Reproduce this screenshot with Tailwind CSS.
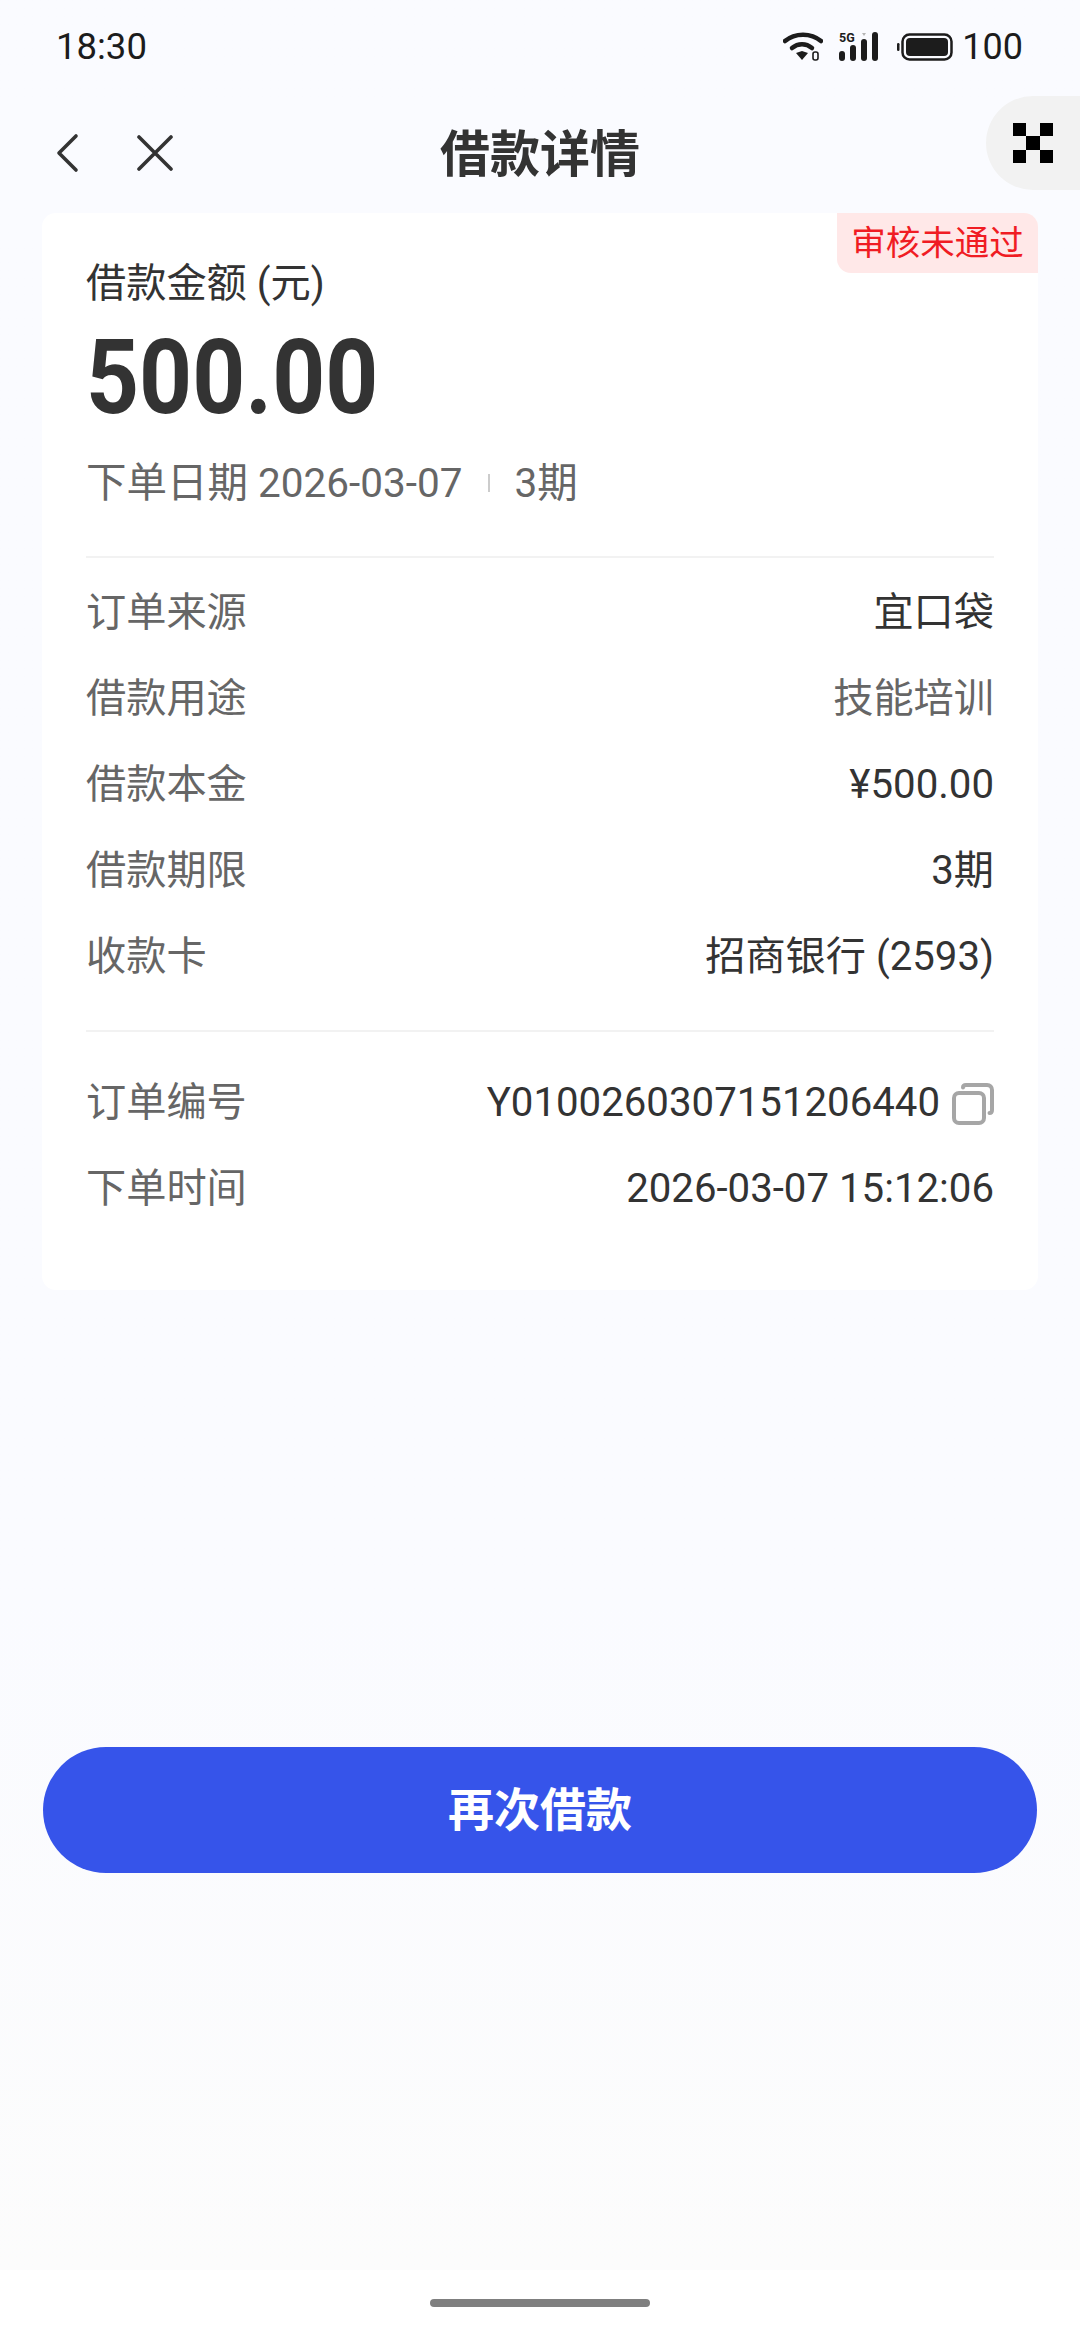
<!doctype html>
<html><head><meta charset="utf-8"><script src="https://cdn.jsdelivr.net/npm/@tailwindcss/browser@4"></script></head>
<body class="m-0">
<div class="relative w-[1080px] h-[2340px] overflow-hidden flex flex-col bg-white font-['Roboto','Noto_Sans_CJK_SC',sans-serif]">
  <div class="h-[2270px] flex flex-col bg-gradient-to-b from-[#fafbff] from-70% to-[#fcfcfc]">
    <!-- status bar -->
    <div class="h-[94px] shrink-0 pl-[56px] pr-[57px] flex items-center justify-between text-[#1c1c1c] text-[36px]">
      <span class="leading-none text-[36.5px]">18:30</span>
      <div class="flex items-center">
        <svg width="40" height="30" viewBox="0 0 40 30" class="mr-[16px]" fill="none"><path d="M2 9C12 0.5 28 0.5 38 9" stroke="#1c1c1c" stroke-width="4.5" stroke-linecap="round"/><path d="M9 16C15 11 23 11 29 16" stroke="#1c1c1c" stroke-width="4.5" stroke-linecap="round"/><path d="M13 21L19 19L25 21L19 28Z" fill="#1c1c1c"/><rect x="30" y="20" width="5" height="8" rx="2" fill="none" stroke="#1c1c1c" stroke-width="1.6"/></svg>
        <svg width="40" height="36" viewBox="0 -6 40 36" class="mr-[18px] -mt-[6px]"><text x="0" y="10" font-size="12.5" font-weight="700" fill="#1c1c1c" font-family="Roboto">5G</text><rect x="0" y="19" width="6" height="10" rx="3" fill="#1c1c1c"/><rect x="11" y="13" width="6" height="16" rx="3" fill="#1c1c1c"/><rect x="22" y="7" width="6" height="22" rx="3" fill="#1c1c1c"/><rect x="33" y="0" width="6" height="29" rx="3" fill="#1c1c1c"/><path d="M23 1H27L25 4Z" fill="#b5b5b5"/></svg>
        <svg width="56" height="28" viewBox="0 0 56 28" class="mr-[9px]" fill="none"><rect x="0" y="10" width="2.5" height="8" rx="1.2" fill="#1c1c1c"/><rect x="5.5" y="1.5" width="49" height="25" rx="7" stroke="#1c1c1c" stroke-width="2.5"/><rect x="9" y="5" width="42" height="18" rx="4" fill="#1c1c1c"/></svg>
        <span class="leading-none">100</span>
      </div>
    </div>
    <!-- nav -->
    <div class="relative h-[118px] shrink-0 flex items-center justify-center">
      <svg width="24" height="40" viewBox="0 0 24 40" class="absolute left-[55px] top-[39px]" fill="none"><path d="M21 3L4 20L21 37" stroke="#333" stroke-width="3.6" stroke-linecap="round" stroke-linejoin="round"/></svg>
      <svg width="36" height="36" viewBox="0 0 36 36" class="absolute left-[137px] top-[41px]" fill="none"><path d="M2 2L34 34M34 2L2 34" stroke="#333" stroke-width="3.6" stroke-linecap="round"/></svg>
      <h1 class="m-0 pt-[3px] text-[50px] font-bold leading-none text-[#333]">借款详情</h1>
      <div class="absolute left-[986px] top-[2px] w-[110px] h-[94px] rounded-l-[47px] bg-[#f2f2f2] flex items-center pl-[27px]">
        <div class="grid grid-cols-3 grid-rows-3 w-[40px] h-[40px]">
          <i class="bg-black"></i><i></i><i class="bg-black"></i><i></i><i class="bg-black"></i><i></i><i class="bg-black"></i><i></i><i class="bg-black"></i>
        </div>
      </div>
    </div>
    <!-- card -->
    <div class="relative mx-[42px] h-[1077px] mt-[1px] shrink-0 bg-white rounded-[14px] px-[44px] pt-[43px] text-[#333]">
      <div class="absolute right-0 top-0 w-[201px] h-[60px] bg-[#ffe8e8] rounded-tr-[14px] rounded-bl-[14px] flex items-center justify-center text-[34.5px] leading-none text-[#f01c23]">审核未通过</div>
      <div class="text-[40.2px] leading-[56px]">借款金额 (元)</div>
      <div class="text-[104px] font-bold leading-[100px] mt-[16px] scale-x-[0.89] origin-left">500.00</div>
      <div class="flex items-center text-[40.5px] leading-[56px] text-[#666] mt-[27px]">
        <span>下单日期 2026-03-07</span>
        <i class="w-[2px] h-[18px] bg-[#ccc] mx-[25px]"></i>
        <span>3期</span>
      </div>
      <div class="h-[2px] bg-[#f2f2f2] mt-[45px]"></div>
      <div class="flex flex-col mt-[12px] text-[40.2px]">
        <div class="h-[86px] flex items-center justify-between"><span class="text-[#666]">订单来源</span><span>宜口袋</span></div>
        <div class="h-[86px] flex items-center justify-between"><span class="text-[#666]">借款用途</span><span class="text-[#666]">技能培训</span></div>
        <div class="h-[86px] flex items-center justify-between"><span class="text-[#666]">借款本金</span><span>¥500.00</span></div>
        <div class="h-[86px] flex items-center justify-between"><span class="text-[#666]">借款期限</span><span>3期</span></div>
        <div class="h-[86px] flex items-center justify-between"><span class="text-[#666]">收款卡</span><span>招商银行 (2593)</span></div>
      </div>
      <div class="h-[2px] bg-[#f2f2f2] mt-[30px]"></div>
      <div class="flex flex-col mt-[28px] text-[40.2px]">
        <div class="h-[86px] flex items-center justify-between"><span class="text-[#666]">订单编号</span>
          <span class="flex items-center">Y0100260307151206440
            <svg width="42" height="42" viewBox="0 0 42 42" class="ml-[12px] mt-[2px]" fill="none"><rect x="2" y="10" width="30" height="30" rx="5" stroke="#a6a6a6" stroke-width="4"/><path d="M11 4.5C11 3 12 2 14 2H35C38 2 40 4 40 7V27C40 29 39 30 37.5 30" stroke="#a6a6a6" stroke-width="4" stroke-linecap="round"/></svg>
          </span></div>
        <div class="h-[86px] flex items-center justify-between"><span class="text-[#666]">下单时间</span><span>2026-03-07 15:12:06</span></div>
      </div>
    </div>
    <div class="mx-[43px] mt-[457px] h-[126px] shrink-0 rounded-[63px] bg-[#3654ea] flex items-center justify-center text-white text-[46px] font-bold leading-none">再次借款</div>
  </div>
  <div class="flex-1 flex justify-center pt-[29px]"><div class="w-[220px] h-[8px] rounded-full bg-[#7f7f7f]"></div></div>
</div>
</body></html>
